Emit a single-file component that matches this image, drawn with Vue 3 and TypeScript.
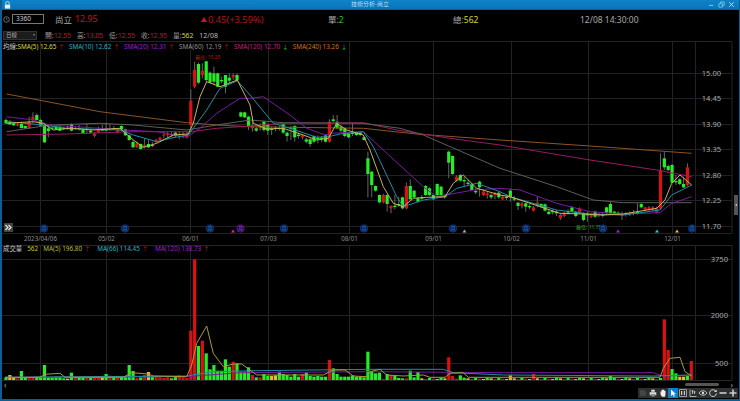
<script setup lang="ts">
type Candle = [number, number, number, number, number]
const toX = (i: number) => 6 + 3.85 * i
const Y = (z: number) => 60 + z / 3

// colour (0 green, 1 red), body top, body bottom, wick top, wick bottom, in 3x crop units
const raw: Candle[] = [
[0,180,190,175,192],[0,185,193,180,195],[0,190,196,188,198],[1,193,197,190,199],[0,192,204,185,206],[0,198,205,196,207],[1,185,204,170,206],[1,170,180,157,190],[0,165,180,160,182],[0,180,197,176,199],[0,195,247,190,249],[0,205,213,198,232],[0,203,206,198,208],[0,200,208,196,210],[0,200,212,198,214],[0,204,207,200,210],[0,203,206,192,210],[0,192,212,190,214],[1,204,207,198,210],[0,204,206,195,212],[0,210,220,206,222],[1,207,209,190,222],[0,212,218,208,220],[1,220,228,216,232],[1,208,218,200,220],[0,205,212,195,214],[0,205,212,188,214],[1,207,209,192,212],[0,204,206,198,210],[1,207,218,204,220],[0,198,208,196,210],[0,208,226,206,228],[0,226,240,224,242],[0,246,262,240,264],[1,250,262,244,264],[0,252,267,250,269],[1,255,262,235,265],[0,252,262,240,264],[0,255,258,245,262],[1,240,245,236,250],[1,233,240,230,244],[1,224,227,213,235],[1,222,225,213,235],[0,222,225,215,232],[0,218,228,214,232],[1,221,224,215,238],[1,220,226,216,235],[1,225,232,215,236],
[1,122,195,88,205],[1,30,80,5,85],[0,12,68,8,72],[1,32,45,10,55],[0,4,60,2,66],[0,38,68,34,70],[0,40,65,20,75],[0,40,80,38,82],[0,60,64,50,70],[0,45,80,45,100],[0,53,62,40,70],[1,45,52,40,60],[0,45,60,40,62],[0,157,170,155,172],[0,157,172,155,174],[0,170,198,168,210],
[1,195,205,170,215],[0,205,212,200,216],[1,198,205,190,212],[0,185,210,182,215],[0,195,212,190,225],[0,206,210,200,225],[0,203,207,198,214],[0,204,207,198,212],[0,193,218,190,222],[0,218,228,214,245],[0,203,207,198,240],[0,198,232,196,245],[0,224,228,218,236],[1,226,232,222,238],[0,238,245,234,250],[0,238,252,235,260],[0,228,245,226,250],[0,233,237,226,250],[0,233,237,228,246],[0,226,245,224,248],[1,185,245,178,248],[0,178,183,165,186],[0,185,205,165,208],[0,200,212,196,216],[0,205,228,202,232],[0,220,232,218,235],[0,218,222,190,228],[0,218,225,214,228],[0,218,225,215,228],[0,232,240,230,242],
[0,295,342,275,412],[0,335,375,333,412],[0,378,392,376,395],[0,405,427,403,430],[1,405,427,402,430],[0,405,432,403,455],[1,438,445,436,460],[0,437,441,405,448],[0,432,436,410,440],[0,412,445,410,448],[1,378,445,368,448],[0,378,418,358,420],[0,392,412,390,415],[0,415,425,412,428],[0,412,416,405,420],[0,378,405,375,408],[0,385,405,382,408],[0,405,418,402,420],[0,372,405,370,408],[0,380,405,378,410],[0,405,412,402,416],[0,275,308,272,355],[0,288,342,286,345],[1,350,362,346,365],[0,345,362,342,365],[0,360,364,350,378],[0,368,372,360,378],[0,372,390,368,392],[0,393,397,385,402],[0,365,382,362,410],[1,395,405,392,408],[1,400,405,396,416],[0,405,412,400,418],[1,400,405,396,418],[0,398,412,395,416],
[1,410,418,405,420],[0,410,414,404,420],[0,392,412,385,425],[0,415,419,408,424],[0,428,438,426,450],[1,430,438,426,445],[0,430,440,428,455],[0,438,442,432,448],[1,442,452,438,455],[1,428,438,410,442],[0,432,440,430,445],[0,433,452,430,455],[0,455,462,450,465],[0,453,457,448,464],[0,455,460,450,468],[1,465,475,460,480],[1,458,468,455,472],[0,454,458,448,464],[0,442,455,438,458],[0,455,468,452,472],[1,445,458,442,462],[0,460,480,458,484],[0,462,466,455,485],[1,464,470,460,474],[0,455,470,452,474],[1,463,467,458,472],[0,463,467,458,472],[0,442,458,440,462],[0,432,460,425,462],[0,455,460,452,464],[0,458,462,454,466],[1,463,467,455,480],[1,461,465,456,470],[1,460,464,454,468],[1,458,462,450,466],[0,456,460,430,464],[0,432,442,430,446],[1,442,450,440,454],[1,442,448,438,452],[1,442,450,438,454],[1,445,458,440,460],[1,330,445,280,450],[0,295,322,275,330],[0,318,330,314,334],[0,315,368,312,370],[0,363,367,345,375],[0,358,372,355,376],[0,372,382,350,384],[1,322,375,310,378]
]
const candles = raw.map((c, i) => ({
  x: toX(i), red: c[0] === 1, top: Y(c[1]), h: Math.max(1, (c[2] - c[1]) / 3), wt: Y(c[3]), wb: Y(c[4])
}))

type Pt = [number, number]
const join = (...secs: [number, Pt[]][]) => secs
  .flatMap(([ox, pts]) => pts.map(p => `${(ox + p[0] / 3).toFixed(1)},${Y(p[1]).toFixed(1)}`)).join(' ')

const maLines = [
  { cls: 'l-orange', pts: join([0, [[20,102],[300,155],[560,188],[650,195],[750,200]]], [250, [[340,205],[500,222],[750,240]]], [490, [[300,258],[605,280]]]) },
  { cls: 'l-pink', pts: join([0, [[20,225],[200,222],[400,215],[572,215],[650,205],[750,198]]], [250, [[100,190],[340,188],[440,210],[600,235],[750,255]]], [490, [[300,300],[500,330],[605,350]]]) },
  { cls: 'l-gray', pts: join([0, [[20,215],[150,195],[300,190],[400,195],[560,210],[650,195],[750,180]]], [250, [[100,188],[340,190],[450,205],[520,225],[750,325]]], [490, [[200,380],[310,420],[400,428],[605,428]]]) },
  { cls: 'l-purple', pts: join([0, [[20,170],[100,180],[150,195],[300,205],[370,210],[470,215],[560,232],[600,205],[650,160],[720,115],[750,115]]], [250, [[40,110],[120,165],[170,205],[225,225],[240,220],[340,215],[520,380],[560,410],[670,390],[750,385]]], [490, [[90,390],[200,430],[300,455],[400,462],[510,458],[545,430],[605,410]]]) },
  { cls: 'l-cyan', pts: join([0, [[20,185],[130,195],[200,205],[360,210],[400,225],[470,245],[510,235],[565,225],[620,150],[660,85],[712,62],[750,105]]], [250, [[70,190],[120,205],[200,232],[235,230],[270,222],[340,215],[370,260],[440,410],[460,440],[520,420],[585,410],[620,385],[680,370],[750,395]]], [490, [[60,410],[200,450],[300,462],[400,465],[510,450],[545,405],[605,375]]]) },
  { cls: 'l-yellow', pts: join([0, [[20,190],[100,185],[130,190],[160,210],[210,205],[280,210],[360,205],[400,240],[430,262],[470,250],[520,225],[565,222],[580,190],[600,110],[620,65],[660,80],[712,60],[750,135]]], [250, [[10,190],[50,207],[100,205],[160,225],[200,240],[235,235],[260,190],[290,210],[340,225],[360,270],[400,380],[430,430],[460,440],[490,415],[530,412],[585,410],[610,370],[640,345],[680,385],[750,405]]], [490, [[60,410],[120,430],[210,460],[280,462],[340,465],[400,462],[500,445],[525,420],[545,370],[570,345],[605,375]]]) },
]

const VY = (z: number) => 240 + z / 3
const volJoin = (...secs: [number, Pt[]][]) => secs
  .flatMap(([ox, pts]) => pts.map(p => `${(ox + p[0] / 3).toFixed(1)},${VY(p[1]).toFixed(1)}`)).join(' ')
const volLines = [
  { cls: 'l-purple', pts: volJoin([0, [[15,412],[560,410],[720,398],[1110,395]]], [370, [[400,398],[850,398],[880,408],[965,405]]]) },
  { cls: 'l-cyan', pts: volJoin([0, [[15,412],[560,408],[640,395],[770,392],[1110,388]]], [370, [[220,388],[250,398],[400,405],[850,408],[965,405]]]) },
  { cls: 'l-volma', pts: volJoin([0, [[15,412],[120,412],[135,403],[180,400],[195,412],[370,412],[395,398],[445,402],[460,408],[560,410],[575,375],[590,310],[620,258],[640,340],[670,380],[700,372],[725,372],[770,405],[970,405],[1000,390],[1035,390],[1060,408],[1100,410]]], [370, [[0,395],[30,388],[50,405],[100,408],[160,405],[180,412],[225,412],[240,400],[280,398],[295,412],[870,412],[880,385],[900,355],[930,352],[945,395],[965,408]]]) },
]

const volHead = 'ryyrggrrggg'.concat('rrggryrgrggrrryrrgrgrggg', 'rryryrrrrryyrgrgrrgrgrrggrrggrgyrgyyrggrgrygrrrgrygggrrggg')
const volH = [8,15,8,5,27,8,6,6,10,10,45,8,8,10,10,5,4,22,8,8,6,6,6,8,8,8,18,13,8,6,10,10,45,27,6,8,15,24,12,10,8,6,8,5,10,14,8,6,148,362,102,118,80,32,45,28,28,62,40,55,50,25,25,38,15,8,8,18,12,12,14,25,18,15,10,18,10,18,22,12,10,12,10,10,60,35,18,10,10,10,14,10,10,8,85,25,20,22,3,18,15,12,6,5,5,28,8,24]
const tailColors = 'yrgryg'
const tailH = [5,3,6,4,3,7]
const overrides: Record<number, [string, number]> = {
  115: ['r', 68], 116: ['r', 12], 118: ['g', 14], 131: ['y', 14], 137: ['r', 18], 157: ['g', 12],
  171: ['r', 182], 172: ['r', 90], 173: ['g', 33], 174: ['g', 20], 175: ['y', 10], 176: ['y', 10], 177: ['g', 12], 178: ['r', 57],
}
const bars = Array.from({ length: 179 }, (_, i) => {
  const o = overrides[i]
  const c = o ? o[0] : i < volH.length ? (candles[i].red ? 'r' : (volHead[i] === 'y' ? 'y' : 'g')) : tailColors[i % 6]
  const h = (o ? o[1] : i < volH.length ? volH[i] : tailH[i % 6]) / 3
  return { x: toX(i), y: 380 - h, h, cls: c === 'r' ? 'f-red' : c === 'g' ? 'f-green' : 'f-gold' }
})

const vGrid = [40.5, 106.5, 190.5, 268.5, 349.5, 433.5, 511.5, 588.5, 672.5, 695.5]
const pGrid = [[73, '15.00'], [98, '14.45'], [124, '13.90'], [149, '13.35'], [175, '12.80'], [200, '12.25'], [226, '11.70']] as const
const vGridH = [[259, '3750'], [315, '2000'], [363, '500']] as const
const dates = [[40.5, '2023/04/06'], [106.5, '05/02'], [190.5, '06/01'], [268.5, '07/03'], [349.5, '08/01'], [433.5, '09/01'], [511.5, '10/02'], [588.5, '11/01'], [672.5, '12/01']] as const
const months = [44, 125, 210, 284, 364, 453, 526, 603, 692]
const marks = [[233, 'f-magenta'], [464.5, 'f-silver'], [618, 'f-violet'], [657, 'f-sky'], [677, 'f-gold']] as const

const ohlc = [['開', '12.55'], ['高', '13.05'], ['低', '12.55'], ['收', '12.95']]
const smas = [
  { name: 'SMA(5)', val: '12.65', up: true, cls: 't-yellow' },
  { name: 'SMA(10)', val: '12.62', up: true, cls: 't-cyan' },
  { name: 'SMA(20)', val: '12.31', up: true, cls: 't-purple' },
  { name: 'SMA(60)', val: '12.19', up: true, cls: 't-gray' },
  { name: 'SMA(120)', val: '12.70', up: false, cls: 't-pink' },
  { name: 'SMA(240)', val: '13.26', up: false, cls: 't-orange' },
]
const volLegend = [
  { text: 'MA(5) 196.80', cls: 't-volyellow' },
  { text: 'MA(66) 114.45', cls: 't-cyan' },
  { text: 'MA(120) 138.73', cls: 't-purple' },
]
</script>

<template>
  <div class="window">
    <header class="titlebar">
      <svg class="lock" viewBox="0 0 8 9"><path d="M2 4V2.6a2 2 0 0 1 4 0V4" fill="none" stroke="#cfe8f8" stroke-width="1" /><rect x="1" y="4" width="6" height="4.6" fill="#dff0fb" /></svg>
      <span class="title">技術分析-尚立</span>
      <div class="winctl">
        <svg viewBox="0 0 8 8"><path d="M1 5h5" stroke="#9fd0ee" /></svg>
        <svg viewBox="0 0 8 8"><path d="M1 3h4v4H1zM3 3V1h4v4H5" fill="none" stroke="#9fd0ee" stroke-width=".8" /></svg>
        <svg viewBox="0 0 8 8"><path d="M1.5 1.5l5 5M6.5 1.5l-5 5" stroke="#d5ebf8" /></svg>
      </div>
    </header>

    <div class="body">
      <section class="quote">
        <svg class="clock" viewBox="0 0 8 8"><circle cx="4" cy="4" r="3.2" fill="none" stroke="#aaa" stroke-width=".7" /><path d="M4 2v2l1.4 1" fill="none" stroke="#aaa" stroke-width=".6" /></svg>
        <span class="code">3360</span>
        <span class="name">尚立</span>
        <span class="price">12.95</span>
        <span class="change"><i class="tri"></i>0.45(+3.59%)</span>
        <span class="single">單:<b>2</b></span>
        <span class="total">總:<b>562</b></span>
        <span class="time">12/08 14:30:00</span>
      </section>

      <section class="tools">
        <span class="select">日線<i></i></span>
        <span v-for="o in ohlc" :key="o[0]" class="ohlc">{{ o[0] }}:<b>{{ o[1] }}</b></span>
        <span class="ohlc">量:<b class="gold">562</b></span>
        <span class="ohlc date">12/08</span>
      </section>

      <section class="chart">
        <div class="legend price-legend">
          <span class="lead">均線:</span>
          <span v-for="s in smas" :key="s.name" class="leg" :class="s.cls">{{ s.name }} {{ s.val }}<em :class="s.up ? 'up' : 'down'">{{ s.up ? '↑' : '↓' }}</em></span>
        </div>
        <div class="legend vol-legend">
          <span class="lead">成交量</span>
          <span class="vnum">562</span>
          <span v-for="s in volLegend" :key="s.text" class="leg" :class="s.cls">{{ s.text }}<em class="up">↑</em></span>
        </div>

        <svg class="plot" viewBox="2 41 737 340" width="737" height="340">
          <g class="grid">
            <path v-for="g in pGrid" :key="g[1]" :d="`M2 ${g[0] + .5}H732`" />
            <path v-for="g in vGridH" :key="g[1]" :d="`M2 ${g[0] + .5}H732`" />
            <path v-for="x in vGrid" :key="x" :d="`M${x} 41V233M${x} 245V380`" />
          </g>
          <path class="frame-red" d="M2 41.5H696M2 233.5H732" />
          <path class="frame" d="M696 41.5H732V233M2 245.5H732V380M2 380.5H732" />

          <g v-for="c in candles" :key="c.x">
            <path class="wick" :d="`M${c.x} ${c.wt}V${c.wb}`" />
            <rect :x="c.x - 1.6" :y="c.top" width="3.2" :height="c.h" :class="c.red ? 'f-red' : 'f-green'" />
          </g>
          <polyline v-for="l in maLines" :key="l.cls" :points="l.pts" class="ma" :class="l.cls" />

          <text x="195" y="59" class="hilo hi">最高: 15.25</text>
          <text x="576" y="229" class="hilo lo">最低: 11.75</text>

          <g v-for="m in months" :key="m">
            <circle :cx="m" cy="228.5" r="3.7" class="moon" />
            <text :x="m" y="230.4" class="moon-t">月</text>
          </g>
          <circle cx="240.5" cy="228.5" r="3.7" class="moon purple" />
          <text x="240.5" y="230.4" class="moon-t purple-t">月</text>
          <polygon v-for="m in marks" :key="m[0]" :points="`${m[0] - 2},232.5 ${m[0] + 2},232.5 ${m[0]},229.5`" :class="m[1]" />

          <text v-for="g in pGrid" :key="g[1]" x="711.5" :y="g[0] + 3" class="axis">{{ g[1] }}</text>
          <text v-for="g in vGridH" :key="g[1]" x="728" :y="g[0] + 3" class="axis end">{{ g[1] }}</text>
          <text v-for="d in dates" :key="d[1]" :x="d[0]" y="240.5" class="axis small">{{ d[1] }}</text>

          <rect v-for="b in bars" :key="b.x" :x="b.x - 1.6" :y="b.y" width="3.2" :height="b.h" :class="b.cls" />
          <polyline v-for="l in volLines" :key="l.cls" :points="l.pts" class="ma" :class="l.cls" />
        </svg>

        <button class="more"><svg viewBox="0 0 9 9"><path d="M1.5 2l2.5 2.5L1.5 7M4.5 2L7 4.5 4.5 7" fill="none" stroke="#eee" stroke-width="1.1" /></svg></button>
        <div class="handle"><i></i></div>
      </section>

      <footer class="foot">
        <div class="scroll">
          <span class="arr">‹</span>
          <span class="thumb"></span>
          <span class="arr">›</span>
        </div>
        <div class="iconbar">
          <span class="ib"><svg viewBox="0 0 10 10"><path d="M2 2h4l2 2v4H2z" fill="#444" /></svg></span>
          <span class="ib"><svg viewBox="0 0 10 10"><path d="M3 4V1.5h4V4M1.5 4h7v3.5h-7zM3 6.5h4v2H3z" fill="#ddd" stroke="#222" stroke-width=".4" /></svg></span>
          <span class="ib"><svg viewBox="0 0 10 10"><path d="M2.5 5V3.5h1V2h1v-.5h1V2h1v1h1v3.5L7 8.7H4L2.5 6.5z" fill="#eee" /></svg></span>
          <span class="ib on"><svg viewBox="0 0 10 10"><path d="M3 1.5v6.6l1.7-1.5 1.1 2.2 1-.5-1-2.1h2.2z" fill="#fff" /></svg></span>
          <span class="ib"><svg viewBox="0 0 10 10"><path d="M1.5 1.5h7v7h-7z" fill="none" stroke="#ccc" stroke-width=".7" /><path d="M3 3h1.2v4H3zM5.8 3H7v4H5.8z" fill="#ccc" /></svg></span>
          <span class="ib"><svg viewBox="0 0 10 10"><path d="M2 1.5v7h6.5M4.5 2v4M6.5 3v3M3.5 3h2M5.5 4h2" fill="none" stroke="#ccc" stroke-width=".8" /></svg></span>
          <span class="ib"><svg viewBox="0 0 10 10"><path d="M1 5c2-3 6-3 8 0-2 3-6 3-8 0z" fill="none" stroke="#ddd" stroke-width=".8" /><circle cx="5" cy="5" r="1.2" fill="#ddd" /></svg></span>
          <span class="ib"><svg viewBox="0 0 10 10"><path d="M8 3.5A3.4 3.4 0 1 0 8.4 5.5" fill="none" stroke="#ddd" stroke-width=".9" /><path d="M8.6 1.5v2.6H6z" fill="#ddd" /></svg></span>
          <span class="ib"><svg viewBox="0 0 10 10"><path d="M1.5 4.2h7v1.6h-7z" fill="#ccc" /></svg></span>
          <span class="ib"><svg viewBox="0 0 10 10"><path d="M1.5 4.2h2.7V1.5h1.6v2.7h2.7v1.6H5.8v2.7H4.2V5.8H1.5z" fill="#ccc" /></svg></span>
        </div>
      </footer>
    </div>
  </div>
</template>

<style>
html, body { margin: 0; background: #000; }
</style>

<style scoped>
.window {
  width: 740px;
  height: 401px;
  box-sizing: border-box;
  display: flex;
  flex-direction: column;
  background: #000;
  border-left: 2px solid #0a5f96;
  border-right: 1px solid #0a5f96;
  border-bottom: 2px solid #0a5f96;
  overflow: hidden;
  font-family: "Noto Sans", "Noto Sans CJK TC", sans-serif;
  color: #bbb;
}
.titlebar {
  height: 10px;
  margin: 0 -1px 0 -2px;
  flex: none;
  display: flex;
  align-items: center;
  position: relative;
  padding: 0 4px;
  background: linear-gradient(#0e83c8, #0a75b8);
  border-bottom: 1px solid #0a5f96;
  box-sizing: border-box;
}
.lock { width: 7px; height: 8px; }
.title {
  position: absolute;
  left: 0;
  right: 0;
  text-align: center;
  font-size: 6px;
  line-height: 9px;
  color: #b8dcf2;
}
.winctl { margin-left: auto; display: flex; gap: 3px; padding-right: 1px; }
.winctl svg { width: 7px; height: 7px; }
.body { flex: 1; display: flex; flex-direction: column; min-height: 0; }

.quote { height: 18px; flex: none; display: flex; align-items: center; font-size: 9.5px; position: relative; }
.clock { width: 7px; height: 7px; margin-left: 1px; }
.code {
  box-sizing: border-box;
  width: 32px;
  height: 10px;
  margin-left: 2px;
  border: 1px solid #777;
  font-size: 6.5px;
  line-height: 8px;
  padding-left: 3px;
  color: #ccc;
}
.name { margin-left: 11px; color: #a8a8a8; font-size: 8.5px; }
.price { margin-left: 3px; color: #c81212; font-size: 8.8px; }
.change { position: absolute; left: 199px; color: #b81414; font-size: 9.3px; display: flex; align-items: center; }
.tri { width: 0; height: 0; border: 3px solid transparent; border-top: 0; border-bottom: 5px solid #d41212; margin-right: 1px; }
.single { position: absolute; left: 326px; font-size: 8.5px; color: #a8a8a8; }
.single b { font-weight: 400; color: #22c822; }
.total { position: absolute; left: 451px; font-size: 8.5px; color: #a8a8a8; }
.total b { font-weight: 400; color: #d8d82a; }
.time { position: absolute; left: 578px; font-size: 8.5px; color: #a8a8a8; }

.tools { height: 13px; flex: none; display: flex; align-items: center; font-size: 6.8px; gap: 6px; padding-top: 1px; box-sizing: border-box; }
.select {
  box-sizing: border-box;
  width: 34px;
  height: 9px;
  margin-left: 1px;
  background: #1c1c1c;
  border: 1px solid #333;
  font-size: 5.5px;
  line-height: 7px;
  padding-left: 2px;
  position: relative;
  margin-right: 2px;
  color: #aaa;
}
.select i { position: absolute; right: 1px; top: 2px; border: 1.5px solid transparent; border-top: 2px solid #888; }
.ohlc { color: #999; }
.ohlc b { font-weight: 400; color: #c81414; }
.ohlc b.gold { color: #d8d82a; }
.date { color: #bbb; font-size: 7px; }

.chart { position: relative; flex: none; height: 340px; }
.plot { display: block; }
.legend {
  position: absolute;
  left: 1px;
  display: flex;
  font-size: 6.4px;
  line-height: 9px;
  white-space: nowrap;
  z-index: 1;
}
.price-legend { top: 0.5px; }
.vol-legend { top: 203px; gap: 5px; }
.price-legend .leg { margin-right: 4.5px; }
.vol-legend .leg { margin-right: 2px; }
.leg em { font-style: normal; font-size: 6px; margin-left: 2px; }
.leg em.up { color: #c81414; }
.leg em.down { color: #22c822; }
.lead { color: #ccc; }
.vnum { color: #c8c82a; }
.t-yellow { color: #d8d83a; }
.t-volyellow { color: #b8b83a; }
.t-cyan { color: #2ab0c4; }
.t-purple { color: #9a22cc; }
.t-gray { color: #909090; }
.t-pink { color: #c0207c; }
.t-orange { color: #d0701e; }

.grid path { stroke: #222; stroke-width: 1; fill: none; }
.frame-red { stroke: #4a0f1e; fill: none; }
.frame { stroke: #262626; fill: none; }
.ma { fill: none; stroke-width: 1; stroke-linejoin: round; }
.l-yellow { stroke: #c8b25a; }
.l-volma { stroke: #a89a3c; }
.l-cyan { stroke: #1f8ea6; }
.l-purple { stroke: #7a1aa4; }
.l-gray { stroke: #5e5e5a; }
.l-pink { stroke: #9a1a60; }
.l-orange { stroke: #8c5426; }
.wick { stroke: #666; stroke-width: 1; }
.f-red { fill: #dc1010; }
.f-green { fill: #24ee24; }
.f-gold { fill: #eeb82a; }
.f-magenta { fill: #e020a8; }
.f-silver { fill: #aaa; }
.f-violet { fill: #a020d8; }
.f-sky { fill: #30c0d8; }
.hilo { font-size: 5px; }
.hi { fill: #b01414; }
.lo { fill: #1fa01f; }
.moon { fill: #06234e; stroke: #0c3f88; stroke-width: .8; }
.moon.purple { fill: #24083c; stroke: #6a1aa0; }
.moon-t { font-size: 5px; fill: #2a6ed8; text-anchor: middle; }
.moon-t.purple-t { fill: #a040e0; }
.axis { font-size: 7.6px; fill: #a8a8a8; text-anchor: middle; }
.axis.end { text-anchor: end; }
.axis.small { font-size: 6.2px; fill: #8c8c8c; }

.more {
  position: absolute;
  left: 2px;
  top: 182px;
  width: 9px;
  height: 9px;
  padding: 0;
  border: 0;
  background: #444;
  display: block;
}
.more svg { display: block; width: 9px; height: 9px; }
.handle {
  position: absolute;
  right: 1px;
  top: 154px;
  width: 4px;
  height: 20px;
  background: #555;
  display: flex;
  align-items: center;
  justify-content: center;
}
.handle i { border: 1.5px solid transparent; border-right: 2px solid #ddd; border-left: 0; }

.foot { flex: 1; display: flex; flex-direction: column; min-height: 0; }
.scroll { height: 7px; flex: none; display: flex; align-items: center; position: relative; }
.arr { font-size: 8px; line-height: 7px; color: #aaa; position: absolute; left: 2px; }
.arr:last-child { left: auto; right: 6px; }
.thumb { position: absolute; left: 683px; width: 34px; height: 3px; border-radius: 2px; background: #555; }
.iconbar { display: flex; justify-content: flex-end; padding-right: 1px; }
.ib { width: 10px; height: 10px; background: #2f2f2f; display: block; }
.ib svg { display: block; width: 10px; height: 10px; }
.ib.on { background: #0f7fc8; }
</style>
